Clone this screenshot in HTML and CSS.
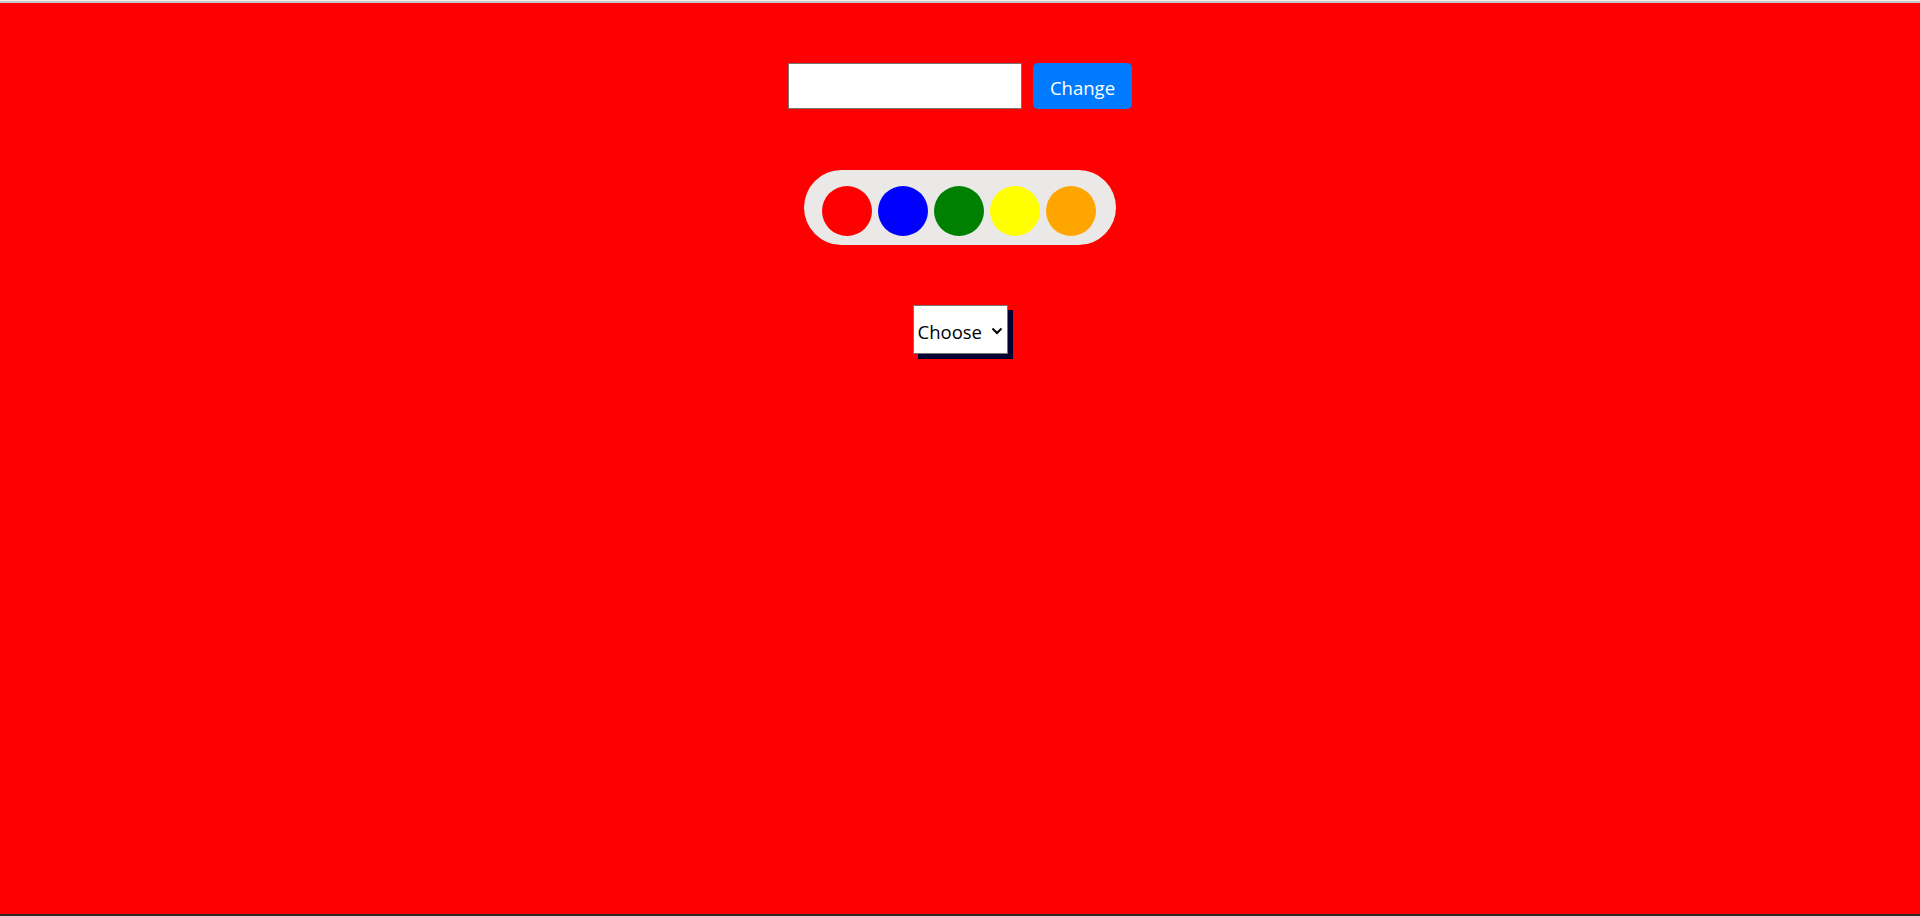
FILE: index.html
```html
<!DOCTYPE html>
<html lang="en">
<head>
<meta charset="utf-8">
<title>Colors</title>
<link rel="stylesheet" href="styles.css">
</head>
<body>
<div class="page">
  <div class="row">
    <input class="text-input" type="text">
    <button class="change-btn">Change</button>
  </div>
  <div class="pill">
    <span class="dot dot-red"></span>
    <span class="dot dot-blue"></span>
    <span class="dot dot-green"></span>
    <span class="dot dot-yellow"></span>
    <span class="dot dot-orange"></span>
  </div>
  <div class="select-wrap">
    <select class="chooser">
      <option>Choose</option>
    </select>
    <svg class="chev" width="12" height="8" viewBox="0 0 12 8"><path d="M1.5 1.5 L6 6 L10.5 1.5" fill="none" stroke="#000" stroke-width="2"/></svg>
  </div>
</div>
</body>
</html>
```

FILE: styles.css
```css
html, body {
  margin: 0;
  padding: 0;
  height: 100%;
}
body {
  background: #ff0000;
  font-family: "Open Sans", "Noto Sans", sans-serif;
  box-sizing: border-box;
  border-top: 1px solid #f4eeee;
}
.page {
  box-sizing: border-box;
  height: 915px;
  border-top: 2px solid #c8c8c8;
  border-bottom: 2px solid #2a2a2a;
  display: flex;
  flex-direction: column;
  align-items: center;
  padding-top: 60px;
}
.row {
  display: flex;
  align-items: center;
}
.text-input {
  box-sizing: border-box;
  width: 234px;
  height: 46px;
  border: 1px solid #767676;
  background: #fff;
  margin: 0;
  padding: 0 4px;
  font-family: inherit;
  font-size: 18px;
}
.change-btn {
  box-sizing: border-box;
  width: 99px;
  height: 46px;
  margin: 0 0 0 11px;
  border: none;
  border-radius: 5px;
  background: #007bff;
  color: #fff;
  font-family: inherit;
  font-size: 18.5px;
  padding: 3px 0 0 0;
}
.pill {
  margin-top: 61px;
  box-sizing: border-box;
  height: 75px;
  width: 312px;
  background: #ebe9e8;
  border-radius: 38px;
  display: flex;
  gap: 6px;
  padding: 16px 18px 9px 18px;
}
.dot {
  width: 50px;
  height: 50px;
  border-radius: 50%;
  flex: none;
}
.dot-red { background: #ff0000; }
.dot-blue { background: #0000ff; }
.dot-green { background: #008000; }
.dot-yellow { background: #ffff00; }
.dot-orange { background: #ffa500; }
.select-wrap {
  margin-top: 60px;
  position: relative;
  box-shadow: 5px 5px 0 #000033;
}
.chooser {
  -webkit-appearance: none;
  appearance: none;
  box-sizing: border-box;
  display: block;
  width: 95px;
  height: 49px;
  border: 1px solid #767676;
  border-radius: 0;
  background: #fff;
  margin: 0;
  padding: 4px 0 0 4px;
  font-family: inherit;
  font-size: 18.5px;
  color: #000;
}
.chev {
  position: absolute;
  left: 78px;
  top: 22px;
  pointer-events: none;
}
```
